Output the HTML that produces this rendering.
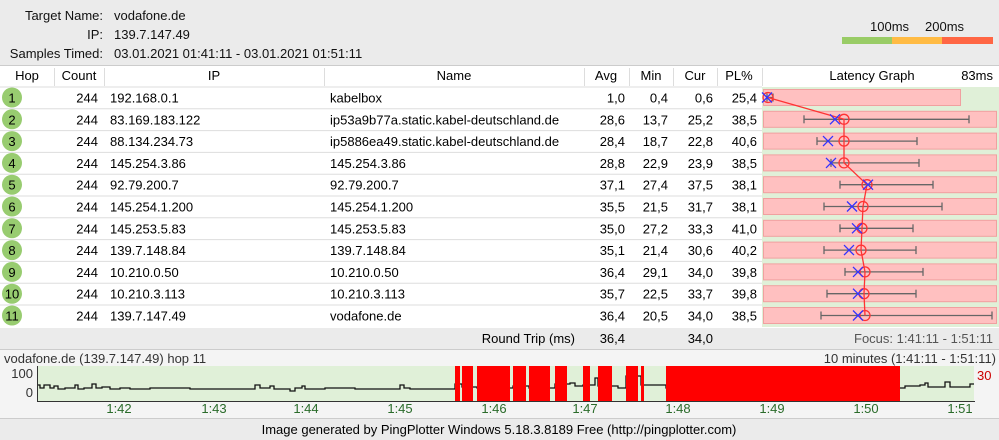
<!DOCTYPE html>
<html><head><meta charset="utf-8"><style>
*{margin:0;padding:0;box-sizing:border-box}
body{width:999px;height:440px;background:#ebebeb;font-family:"Liberation Sans","DejaVu Sans",sans-serif;font-size:13px;color:#111;position:relative;overflow:hidden}
.a{position:absolute;white-space:nowrap}
.r{text-align:right}
</style></head><body>
<div class="a r" style="left:0;width:103px;top:8px">Target Name:</div>
<div class="a" style="left:114px;top:8px">vodafone.de</div>
<div class="a r" style="left:0;width:103px;top:27px">IP:</div>
<div class="a" style="left:114px;top:27px">139.7.147.49</div>
<div class="a r" style="left:0;width:103px;top:46px">Samples Timed:</div>
<div class="a" style="left:114px;top:46px">03.01.2021 01:41:11 - 03.01.2021 01:51:11</div>
<div class="a" style="left:870px;top:19px">100ms</div>
<div class="a" style="left:925px;top:19px">200ms</div>
<div class="a" style="left:842px;top:37px;width:50px;height:7px;background:#99cc66"></div>
<div class="a" style="left:892px;top:37px;width:50px;height:7px;background:#ffbb44"></div>
<div class="a" style="left:942px;top:37px;width:51px;height:7px;background:#ff6644"></div>

<svg class="a" style="left:0;top:0" width="999" height="440" font-family="Liberation Sans, sans-serif" font-size="13">
<rect x="0" y="65" width="999" height="263" fill="#fff"/>
<line x1="0" y1="65.5" x2="999" y2="65.5" stroke="#ccc"/>
<g stroke="#ddd">
<line x1="54.5" y1="68" x2="54.5" y2="86"/><line x1="104.5" y1="68" x2="104.5" y2="86"/><line x1="324.5" y1="68" x2="324.5" y2="86"/><line x1="584.5" y1="68" x2="584.5" y2="86"/><line x1="629.5" y1="68" x2="629.5" y2="86"/><line x1="673.5" y1="68" x2="673.5" y2="86"/><line x1="717.5" y1="68" x2="717.5" y2="86"/><line x1="762.5" y1="68" x2="762.5" y2="86"/>
</g>
<g text-anchor="middle"><text x="27" y="80">Hop</text><text x="79" y="80">Count</text><text x="214" y="80">IP</text><text x="454" y="80">Name</text><text x="606" y="80">Avg</text><text x="651" y="80">Min</text><text x="695" y="80">Cur</text><text x="739" y="80">PL%</text><text x="872" y="80">Latency Graph</text></g>
<text x="993" y="80" text-anchor="end">83ms</text>
<rect x="762" y="87" width="237" height="240" fill="#e0f0d8"/>
<g id="rows"></g>
<rect x="0" y="328" width="999" height="21" fill="#ebebeb"/>
<text x="575" y="343" text-anchor="end">Round Trip (ms)</text>
<text x="625" y="343" text-anchor="end">36,4</text>
<text x="713" y="343" text-anchor="end">34,0</text>
<text x="993" y="343" text-anchor="end" fill="#555">Focus: 1:41:11 - 1:51:11</text>
<line x1="0" y1="349.5" x2="999" y2="349.5" stroke="#ccc"/>
<rect x="0" y="350" width="999" height="68" fill="#f4f4f4"/>
<text x="4" y="363" fill="#333">vodafone.de (139.7.147.49) hop 11</text>
<text x="996" y="363" text-anchor="end" fill="#333">10 minutes (1:41:11 - 1:51:11)</text>
<rect x="37" y="366" width="937" height="35" fill="#e0f0d8"/>
<text x="33" y="378" text-anchor="end" fill="#333">100</text>
<text x="33" y="397" text-anchor="end" fill="#333">0</text>
<text x="977" y="380" fill="#cc0000">30</text>
<polyline fill="none" stroke="#111" stroke-width="1.3" points="37,385 40,385 40,388 44,388 44,385 50,385 50,388 54,388 54,386 58,386 58,389 65,389 65,388 75,388 75,385 78,385 78,389 84,389 84,388 92,388 92,384 96,384 96,388 102,388 102,387 110,387 110,389 120,389 120,388 130,388 130,389 150,389 150,388 190,388 190,389 255,389 255,385 260,385 260,388 270,388 270,386 274,386 274,389 290,389 290,391 295,391 295,388 302,388 302,386 305,386 305,389 325,389 325,388 355,388 355,389 400,389 400,385 404,385 404,388 410,388 410,389 455,389 455,384 462,384 462,387 477,387 477,388 513,388 513,386 529,386 529,388 555,388 555,384 570,384 570,383 575,383 575,386 583,386 583,385 595,385 595,378 598,378 598,386 618,386 618,388 626,388 626,376 641,376 641,385 666,385 666,388 905,388 905,386 920,386 920,385 925,385 925,383 928,383 928,387 945,387 945,382 950,382 950,387 970,387 970,384 974,384"/>
<g fill="#ff0000">
<rect x="455" y="366" width="5" height="35"/><rect x="462" y="366" width="11" height="35"/><rect x="477" y="366" width="33" height="35"/><rect x="513" y="366" width="13" height="35"/><rect x="529" y="366" width="21" height="35"/><rect x="555" y="366" width="12" height="35"/><rect x="583" y="366" width="7" height="35"/><rect x="598" y="366" width="14" height="35"/><rect x="626" y="366" width="12" height="35"/><rect x="641" y="366" width="3" height="35"/><rect x="666" y="366" width="234" height="35"/>
</g>
<line x1="37" y1="401.5" x2="975" y2="401.5" stroke="#333"/>
<line x1="37.5" y1="366" x2="37.5" y2="402" stroke="#333"/>
<g fill="#2a6b2a" text-anchor="middle"><text x="119" y="413">1:42</text><text x="214" y="413">1:43</text><text x="306" y="413">1:44</text><text x="400" y="413">1:45</text><text x="494" y="413">1:46</text><text x="585" y="413">1:47</text><text x="678" y="413">1:48</text><text x="772" y="413">1:49</text><text x="866" y="413">1:50</text><text x="960" y="413">1:51</text></g>
<line x1="0" y1="418.5" x2="999" y2="418.5" stroke="#ccc"/>
<text x="499" y="434" text-anchor="middle">Image generated by PingPlotter Windows 5.18.3.8189 Free (http://pingplotter.com)</text>
</svg>
<script>
var d=[["244","192.168.0.1","kabelbox","1,0","0,4","0,6","25,4",768,767,767,773],
["244","83.169.183.122","ip53a9b77a.static.kabel-deutschland.de","28,6","13,7","25,2","38,5",844,835,804,969],
["244","88.134.234.73","ip5886ea49.static.kabel-deutschland.de","28,4","18,7","22,8","40,6",844,828,817,917],
["244","145.254.3.86","145.254.3.86","28,8","22,9","23,9","38,5",844,831,831,919],
["244","92.79.200.7","92.79.200.7","37,1","27,4","37,5","38,1",867,868,840,933],
["244","145.254.1.200","145.254.1.200","35,5","21,5","31,7","38,1",863,852,824,942],
["244","145.253.5.83","145.253.5.83","35,0","27,2","33,3","41,0",862,857,840,913],
["244","139.7.148.84","139.7.148.84","35,1","21,4","30,6","40,2",861,849,824,916],
["244","10.210.0.50","10.210.0.50","36,4","29,1","34,0","39,8",865,858,845,923],
["244","10.210.3.113","10.210.3.113","35,7","22,5","33,7","39,8",864,858,827,916],
["244","139.7.147.49","vodafone.de","36,4","20,5","34,0","38,5",865,858,821,992]];
var s="",line=[];
d.forEach(function(r,i){var c=97.5+i*21.8,y0=c-11;
s+='<line x1="0" y1="'+(y0+0.5)+'" x2="762" y2="'+(y0+0.5)+'" stroke="#ddd"/>';
s+='<circle cx="12" cy="'+c+'" r="10" fill="#98cc70"/><text x="12" y="'+(c+5)+'" text-anchor="middle">'+(i+1)+'</text>';
s+='<text x="98" y="'+(c+5)+'" text-anchor="end">'+r[0]+'</text><text x="110" y="'+(c+5)+'">'+r[1]+'</text><text x="330" y="'+(c+5)+'">'+r[2]+'</text>';
[[r[3],625],[r[4],668],[r[5],713],[r[6],757]].forEach(function(v){s+='<text x="'+v[1]+'" y="'+(c+5)+'" text-anchor="end">'+v[0]+'</text>'});
s+='<rect x="763.5" y="'+(c-8)+'" width="'+(i==0?197:233)+'" height="16" fill="#ffc0c0" stroke="#f0a0a0"/>';
s+='<g stroke="#666" stroke-width="1.3"><line x1="'+r[9]+'" y1="'+c+'" x2="'+r[10]+'" y2="'+c+'"/><line x1="'+r[9]+'" y1="'+(c-4)+'" x2="'+r[9]+'" y2="'+(c+4)+'"/><line x1="'+r[10]+'" y1="'+(c-4)+'" x2="'+r[10]+'" y2="'+(c+4)+'"/></g>';
line.push(r[7]+','+c);});
s+='<polyline fill="none" stroke="#ff3333" stroke-width="1.3" points="'+line.join(' ')+'"/>';
d.forEach(function(r,i){var c=97.5+i*21.8,x=r[8];
s+='<circle cx="'+r[7]+'" cy="'+c+'" r="5" fill="none" stroke="#ff3333" stroke-width="1.3"/>';
s+='<path d="M'+(x-5)+' '+(c-5)+'L'+(x+5)+' '+(c+5)+'M'+(x-5)+' '+(c+5)+'L'+(x+5)+' '+(c-5)+'" stroke="#3333ff" stroke-width="1.3"/>';});
document.getElementById("rows").innerHTML=s;
</script>
</body></html>
